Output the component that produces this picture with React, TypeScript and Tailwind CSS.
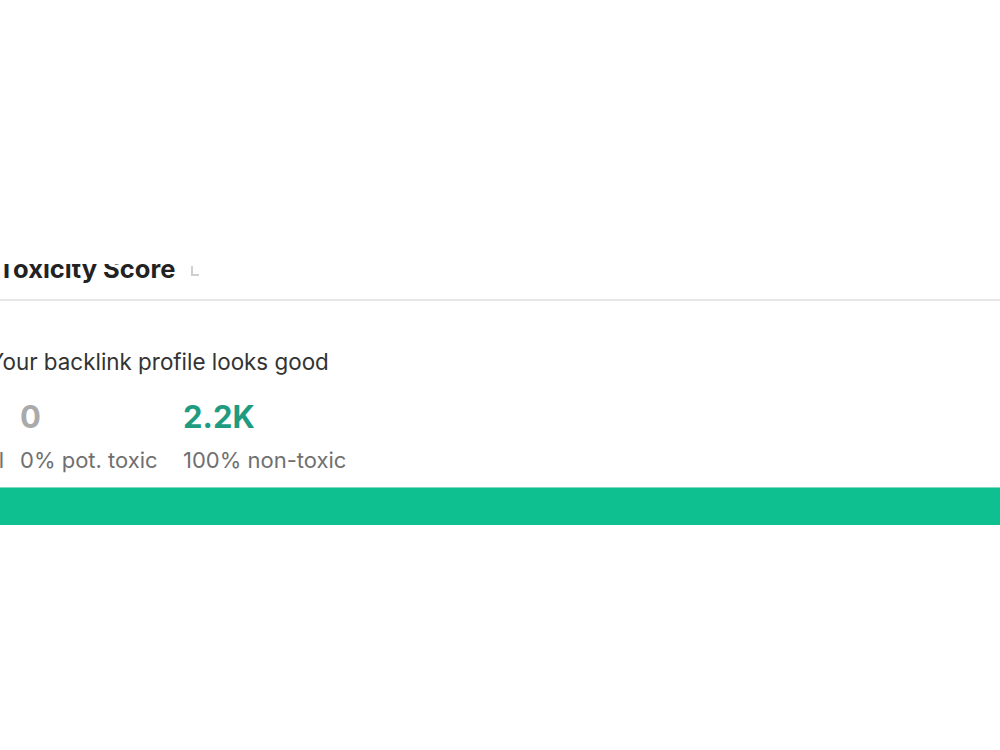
import React from "react";

export default function App() {
  const font = { fontFamily: "Inter, 'Noto Sans', sans-serif" };
  return (
    <div className="w-[1000px] h-[750px] bg-white overflow-hidden" style={font}>
      <div className="h-[264px]" />
      <div className="overflow-hidden">
        <div className="-ml-[2px] -mt-[9px] flex items-end gap-[15px] h-[27px]">
          <span className="text-[25.5px] font-bold text-[#222222] leading-[26px] whitespace-nowrap">Toxicity Score</span>
          <svg width="10" height="12" viewBox="0 0 10 12" className="mb-[5px]">
            <path d="M2 1 L2 10 L9 10" stroke="#cfcfcf" strokeWidth="2" fill="none" />
          </svg>
        </div>
        <div className="h-[17px]" />
        <div className="h-[2px] bg-[#e6e6e6]" />
        <div className="-ml-[11px] pt-[48px] text-[22.4px] leading-[26px] text-[#333333] whitespace-nowrap">Your backlink profile looks good</div>
        <div className="flex pt-[24px]">
          <div className="w-[20px] flex flex-col items-end overflow-hidden">
            <div className="h-[48px]" />
            <div className="text-[22px] leading-[26px] text-[#707070] whitespace-nowrap pr-[16px]">l</div>
          </div>
          <div className="w-[163px] flex flex-col">
            <div className="text-[31px] font-bold leading-[36px] text-[#aaaaaa]">0</div>
            <div className="text-[22px] leading-[26px] text-[#707070] mt-[12px] whitespace-nowrap">0% pot. toxic</div>
          </div>
          <div className="flex flex-col">
            <div className="text-[31px] font-bold leading-[36px] text-[#1f9c7f]">2.2K</div>
            <div className="text-[22px] leading-[26px] text-[#707070] mt-[12px] whitespace-nowrap">100% non-toxic</div>
          </div>
        </div>
        <div className="mt-[14px] h-[38px] bg-[#0ebf90] border-t border-[#7fdcc2]" />
      </div>
    </div>
  );
}
